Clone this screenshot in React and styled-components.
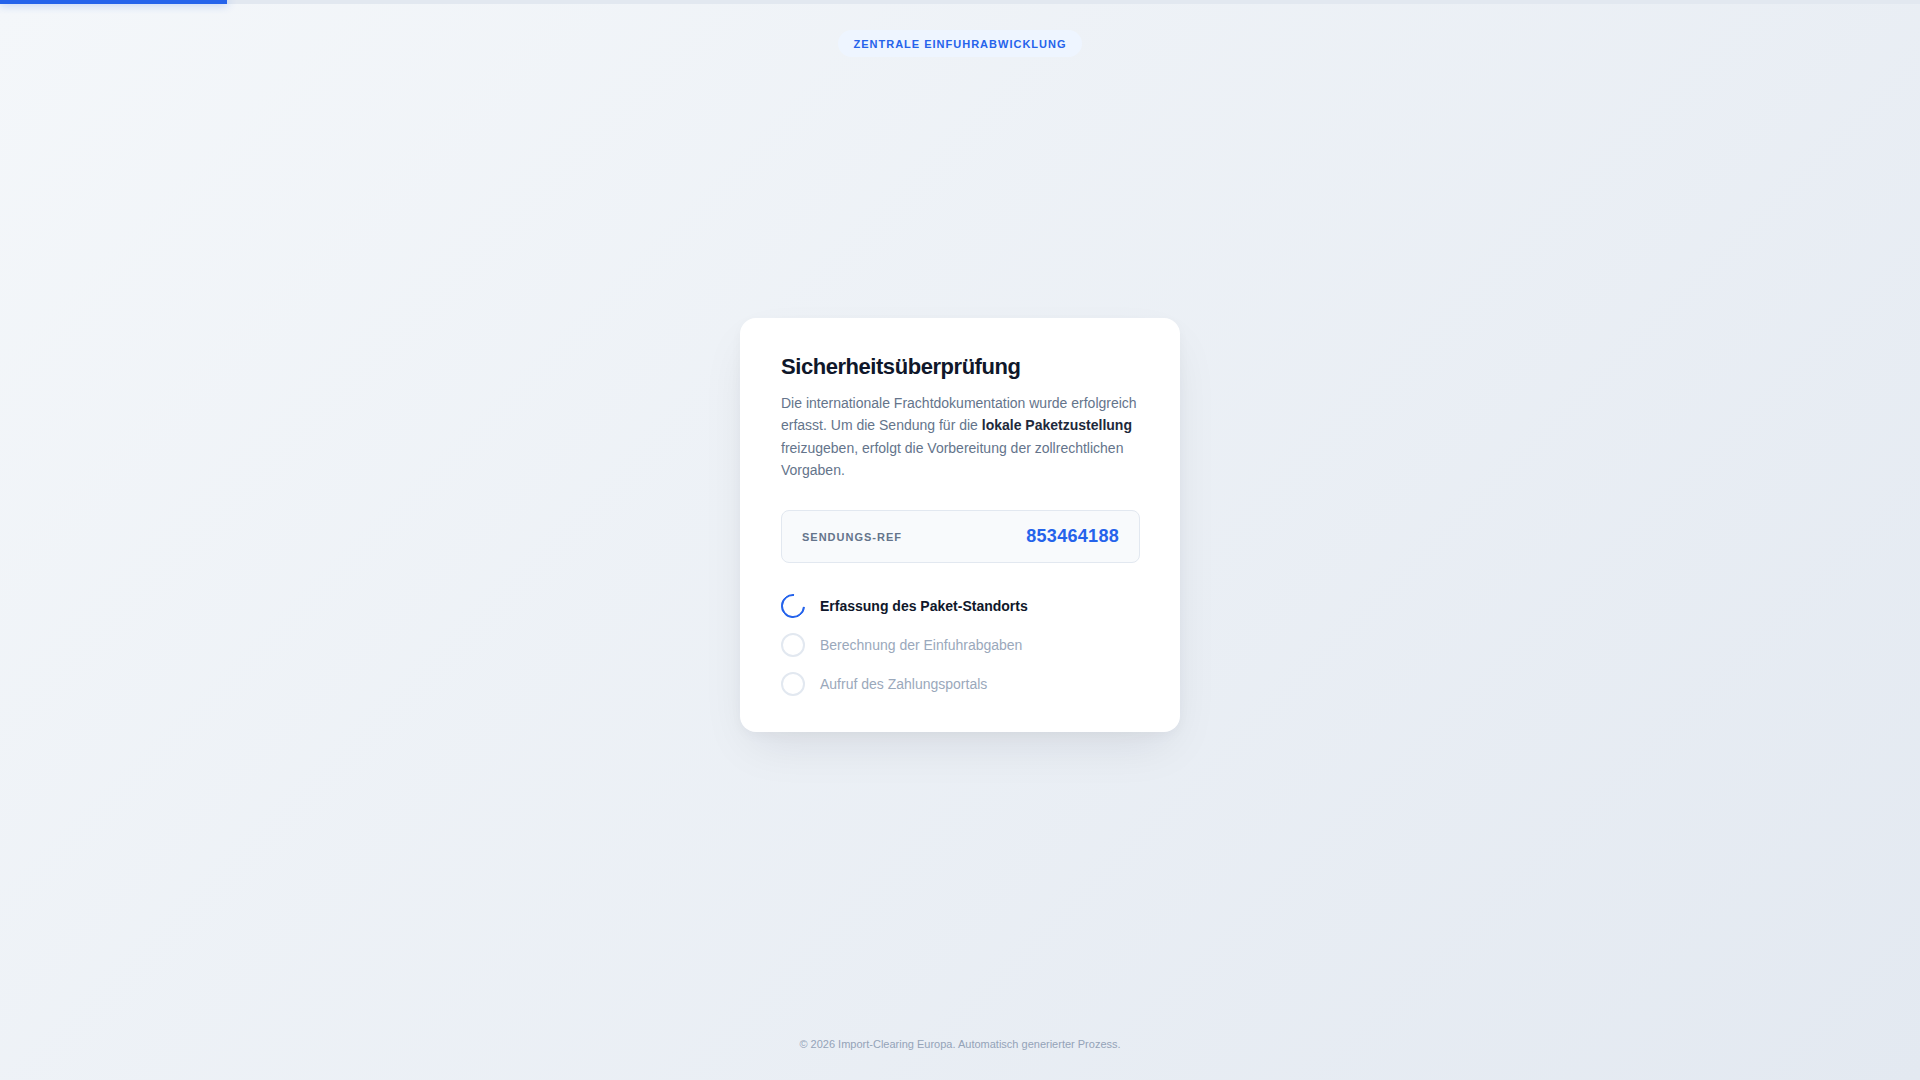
import React from "react";
import styled, { createGlobalStyle } from "styled-components";

const GlobalStyle = createGlobalStyle`
  * { box-sizing: border-box; }
  html, body { margin: 0; padding: 0; }
  body {
    font-family: "Liberation Sans", Arial, sans-serif;
    background: linear-gradient(135deg, #f4f7fa 0%, #e3e9f1 100%);
    min-height: 100vh;
  }
`;

const Page = styled.div`
  min-height: 100vh;
  display: flex;
  flex-direction: column;
  position: relative;
`;

const ProgressTrack = styled.div`
  position: absolute;
  top: 0;
  left: 0;
  right: 0;
  height: 4px;
  background: #e2e8f0;
`;

const ProgressFill = styled.div`
  height: 100%;
  background: #2563eb;
  box-shadow: 0 0 10px rgba(37, 99, 235, 0.45);
`;

const Header = styled.header`
  display: flex;
  justify-content: center;
  padding-top: 30px;
`;

const Badge = styled.span`
  display: inline-flex;
  align-items: center;
  height: 27px;
  padding: 0 16px;
  border-radius: 999px;
  background: #eef5ff;
  color: #2563eb;
  font-size: 11px;
  font-weight: 700;
  letter-spacing: 1px;
  text-transform: uppercase;
`;

const Main = styled.main`
  flex: 1;
  display: flex;
  align-items: center;
  justify-content: center;
  padding-bottom: 15px;
`;

const Card = styled.section`
  width: 440px;
  background: #ffffff;
  border-radius: 16px;
  padding: 36px 40px 36px 41px;
  box-shadow: 0 20px 50px -12px rgba(15, 23, 42, 0.1), 0 4px 12px rgba(15, 23, 42, 0.03);
`;

const Title = styled.h1`
  margin: 0 0 13px;
  font-size: 22px;
  font-weight: 700;
  color: #0f172a;
  letter-spacing: -0.45px;
  line-height: 1.15;
`;

const Lead = styled.p`
  margin: 0 0 29px;
  font-size: 14px;
  line-height: 22.4px;
  color: #64748b;

  strong {
    color: #1e293b;
    font-weight: 700;
  }
`;

const RefBox = styled.div`
  display: flex;
  align-items: center;
  justify-content: space-between;
  height: 53px;
  padding: 0 20px;
  background: #f8fafc;
  border: 1px solid #e2e8f0;
  border-radius: 8px;
  margin-bottom: 31px;
`;

const RefLabel = styled.span`
  font-size: 11px;
  font-weight: 700;
  letter-spacing: 1px;
  text-transform: uppercase;
  color: #64748b;
`;

const RefValue = styled.span`
  font-size: 18px;
  font-weight: 700;
  letter-spacing: 0.3px;
  color: #2563eb;
`;

const Steps = styled.ul`
  list-style: none;
  margin: 0;
  padding: 0;
  display: flex;
  flex-direction: column;
  gap: 15px;
`;

const Step = styled.li`
  display: flex;
  align-items: center;
  gap: 15px;
  height: 24px;
  font-size: 14px;
  font-weight: ${(p) => (p.$active ? 700 : 400)};
  color: ${(p) => (p.$active ? "#0f172a" : "#9aa8bb")};
`;

const Circle = styled.span`
  width: 24px;
  height: 24px;
  flex-shrink: 0;
  border-radius: 50%;
  border: 2px solid #e2e8f0;
`;

const Spinner = styled.span`
  width: 24px;
  height: 24px;
  flex-shrink: 0;
  border-radius: 50%;
  border: 2.5px solid #2563eb;
  border-right-color: transparent;
  transform: rotate(-40deg);
`;

const Footer = styled.footer`
  display: flex;
  justify-content: center;
  padding: 30px 0 30px;
  font-size: 11px;
  color: #94a3b8;
`;

const steps = [
  { label: "Erfassung des Paket-Standorts", active: true },
  { label: "Berechnung der Einfuhrabgaben" },
  { label: "Aufruf des Zahlungsportals" },
];

export default function App() {
  return (
    <>
      <GlobalStyle />
      <Page>
        <ProgressTrack>
          <ProgressFill style={{ width: "227px" }} />
        </ProgressTrack>
        <Header>
          <Badge>Zentrale Einfuhrabwicklung</Badge>
        </Header>
        <Main>
          <Card>
            <Title>Sicherheitsüberprüfung</Title>
            <Lead>
              Die internationale Frachtdokumentation wurde erfolgreich erfasst. Um die Sendung für die{" "}
              <strong>lokale Paketzustellung</strong> freizugeben, erfolgt die Vorbereitung der zollrechtlichen
              Vorgaben.
            </Lead>
            <RefBox>
              <RefLabel>Sendungs-Ref</RefLabel>
              <RefValue>853464188</RefValue>
            </RefBox>
            <Steps>
              {steps.map((s) => (
                <Step key={s.label} $active={s.active}>
                  {s.active ? <Spinner /> : <Circle />}
                  {s.label}
                </Step>
              ))}
            </Steps>
          </Card>
        </Main>
        <Footer>© 2026 Import-Clearing Europa. Automatisch generierter Prozess.</Footer>
      </Page>
    </>
  );
}
